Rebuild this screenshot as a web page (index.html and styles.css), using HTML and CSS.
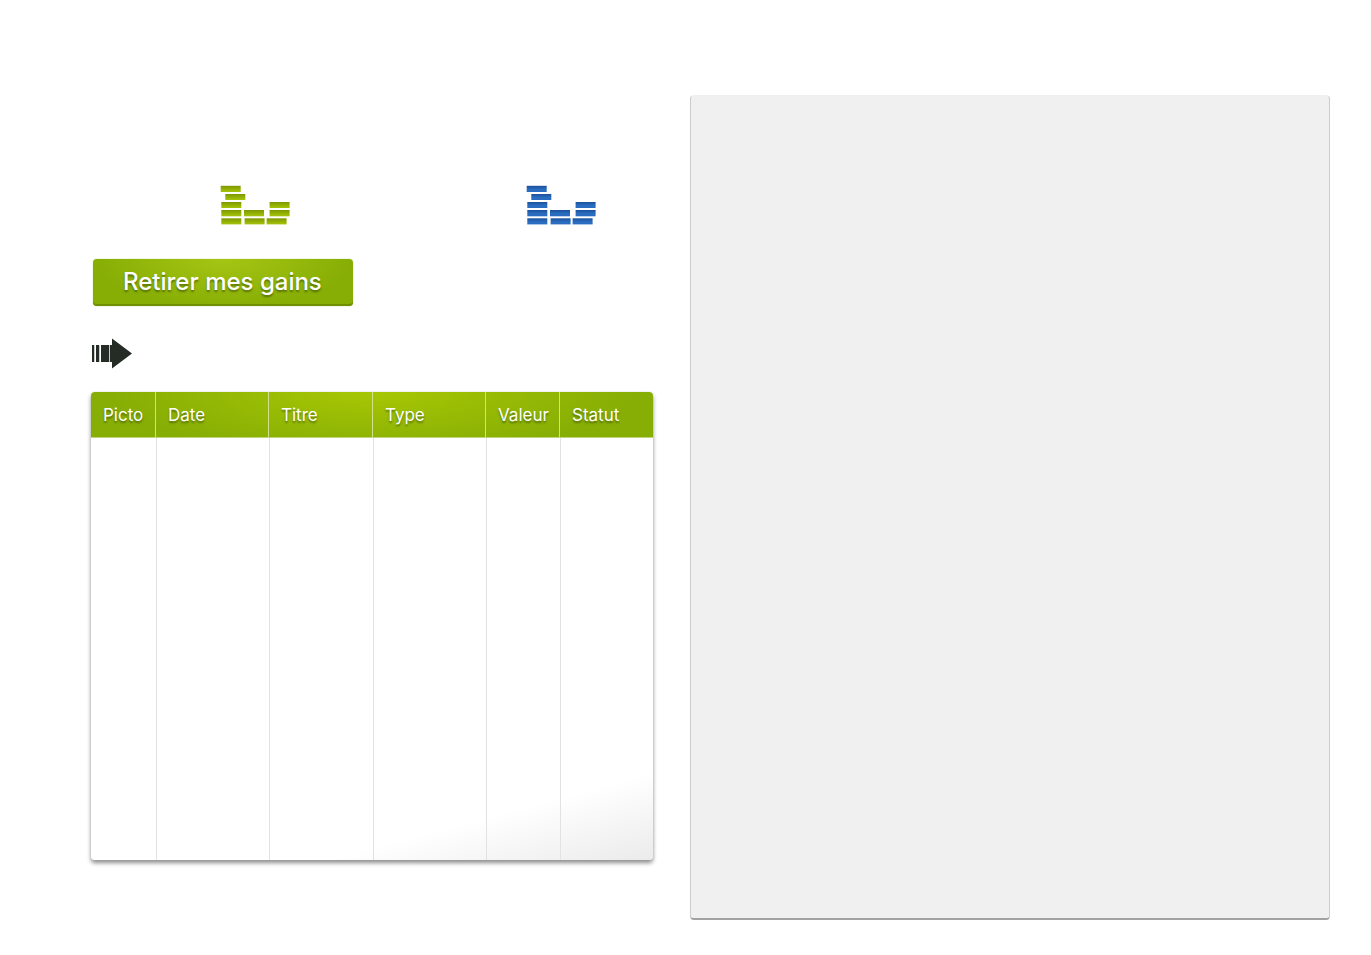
FILE: index.html
```html
<!DOCTYPE html>
<html lang="fr">
<head>
<meta charset="utf-8">
<title>Mes gains</title>
<link rel="stylesheet" href="styles.css">
</head>
<body>
<svg class="defs" aria-hidden="true">
  <defs>
    <linearGradient id="green" x1="0" y1="0" x2="0" y2="1">
      <stop offset="0" stop-color="#7d9800"/><stop offset="1" stop-color="#a6c40a"/>
    </linearGradient>
    <linearGradient id="blue" x1="0" y1="0" x2="0" y2="1">
      <stop offset="0" stop-color="#1c509b"/><stop offset="0.6" stop-color="#2a6dc0"/>
    </linearGradient>
    <g id="coins">
      <rect x="0.7" y="0.8" width="20" height="6.2"/>
      <rect x="5.3" y="9" width="20" height="6"/>
      <rect x="1.3" y="17" width="20" height="6"/>
      <rect x="49.6" y="17" width="20" height="6"/>
      <rect x="1.3" y="25" width="20" height="6.3"/>
      <rect x="24" y="25" width="20" height="6.3"/>
      <rect x="49.6" y="25" width="20" height="6.3"/>
      <rect x="1.3" y="33.3" width="20" height="6.1"/>
      <rect x="24.6" y="33.3" width="20" height="6.1"/>
      <rect x="46.6" y="33.3" width="20" height="6.1"/>
    </g>
  </defs>
</svg>
<main class="page">
  <section class="account">
    <div class="totals">
      <svg class="coins coins-green" width="70" height="40" role="img" aria-label="Gains"><use href="#coins"/></svg>
      <svg class="coins coins-blue" width="70" height="40" role="img" aria-label="Points"><use href="#coins"/></svg>
    </div>
    <button class="withdraw" type="button">Retirer mes gains</button>
    <svg class="arrow" width="42" height="32" aria-hidden="true">
      <path d="M1 7h2v17H1zM5 7h3v17H5zM10 7h8v17h-8zM21 0.5l20 15-20 15V24h-2V7h2z"/>
      <path class="arrow-gap" d="M3 7h1v17H3zM8 7h1v17H8zM18 7h1v17h-1z"/>
    </svg>
    <table class="history">
      <colgroup>
        <col class="col-picto"><col class="col-date"><col class="col-titre"><col class="col-type"><col class="col-valeur"><col class="col-statut">
      </colgroup>
      <thead>
        <tr><th scope="col">Picto</th><th scope="col">Date</th><th scope="col">Titre</th><th scope="col">Type</th><th scope="col">Valeur</th><th scope="col">Statut</th></tr>
      </thead>
      <tbody>
        <tr><td></td><td></td><td></td><td></td><td></td><td></td></tr>
      </tbody>
    </table>
  </section>
  <aside class="panel"></aside>
</main>
</body>
</html>
```
FILE: styles.css
```css
* { box-sizing: border-box; }

body {
  margin: 0;
  background: #fff;
  font-family: Inter, "Liberation Sans", sans-serif;
}

.defs {
  position: absolute;
  width: 0;
  height: 0;
}

.page {
  display: grid;
  grid-template-columns: 562fr 640fr;
  gap: 37px;
  min-height: 100vh;
  padding: 95px 41px 35px 91px;
}

.account {
  display: flex;
  flex-direction: column;
  align-items: flex-start;
  padding: 90px 0 60px;
}

.totals {
  display: flex;
  justify-content: space-between;
  width: 100%;
  padding: 0 57px 0 129px;
}

.coins-green { fill: url(#green); }
.coins-blue { fill: url(#blue); }

.withdraw {
  margin: 34px 0 0 2px;
  height: 47px;
  padding: 0 31px 2px 30px;
  border: 0;
  border-radius: 4px;
  background: radial-gradient(ellipse 130px 48px at 50% 0, #a6c514, #87ae05);
  box-shadow: inset 0 -2px 0 #6f9004, 0 0 1px #87ae05;
  color: #fff;
  font-family: inherit;
  font-size: 24px;
  font-weight: 500;
  text-align: center;
  text-shadow: 0 2px 2px rgba(50, 70, 0, 0.6);
  cursor: pointer;
}

.arrow {
  margin: 32px 0 22px;
  fill: #242c25;
}

.arrow .arrow-gap { fill: #c9cbc9; }

.history {
  width: 100%;
  height: 468px;
  table-layout: fixed;
  border-spacing: 0;
  border-radius: 4px;
  background: linear-gradient(345deg, #ebebeb 0, #fff 84px);
  box-shadow: 0 0 1px #bbb, 0 3px 4px rgba(0, 0, 0, 0.45);
}

.col-picto { width: 65px; }
.col-date { width: 113px; }
.col-titre { width: 104px; }
.col-type { width: 113px; }
.col-valeur { width: 74px; }

.history thead {
  background: radial-gradient(ellipse 260px 60px at 50% 0, #a7c704, #87ae05);
}

.history th {
  height: 46px;
  padding: 0 0 0 12px;
  border-right: 1px solid #d2e08c;
  border-bottom: 1px solid #c0d47a;
  color: #fff;
  font-size: 17px;
  font-weight: 400;
  text-align: left;
  text-shadow: 0 2px 2px rgba(50, 70, 0, 0.6);
}

.history th:first-child { border-top-left-radius: 4px; }

.history th:last-child {
  border-right: 0;
  border-top-right-radius: 4px;
}

.history td { border-left: 1px solid #e2e2e2; }
.history td:first-child { border-left: 0; }

.panel {
  border: 1px solid #ccc;
  border-top-color: #efefef;
  border-bottom: 2px solid #a2a2a2;
  border-radius: 4px;
  background: #f0f0f0;
}
```
